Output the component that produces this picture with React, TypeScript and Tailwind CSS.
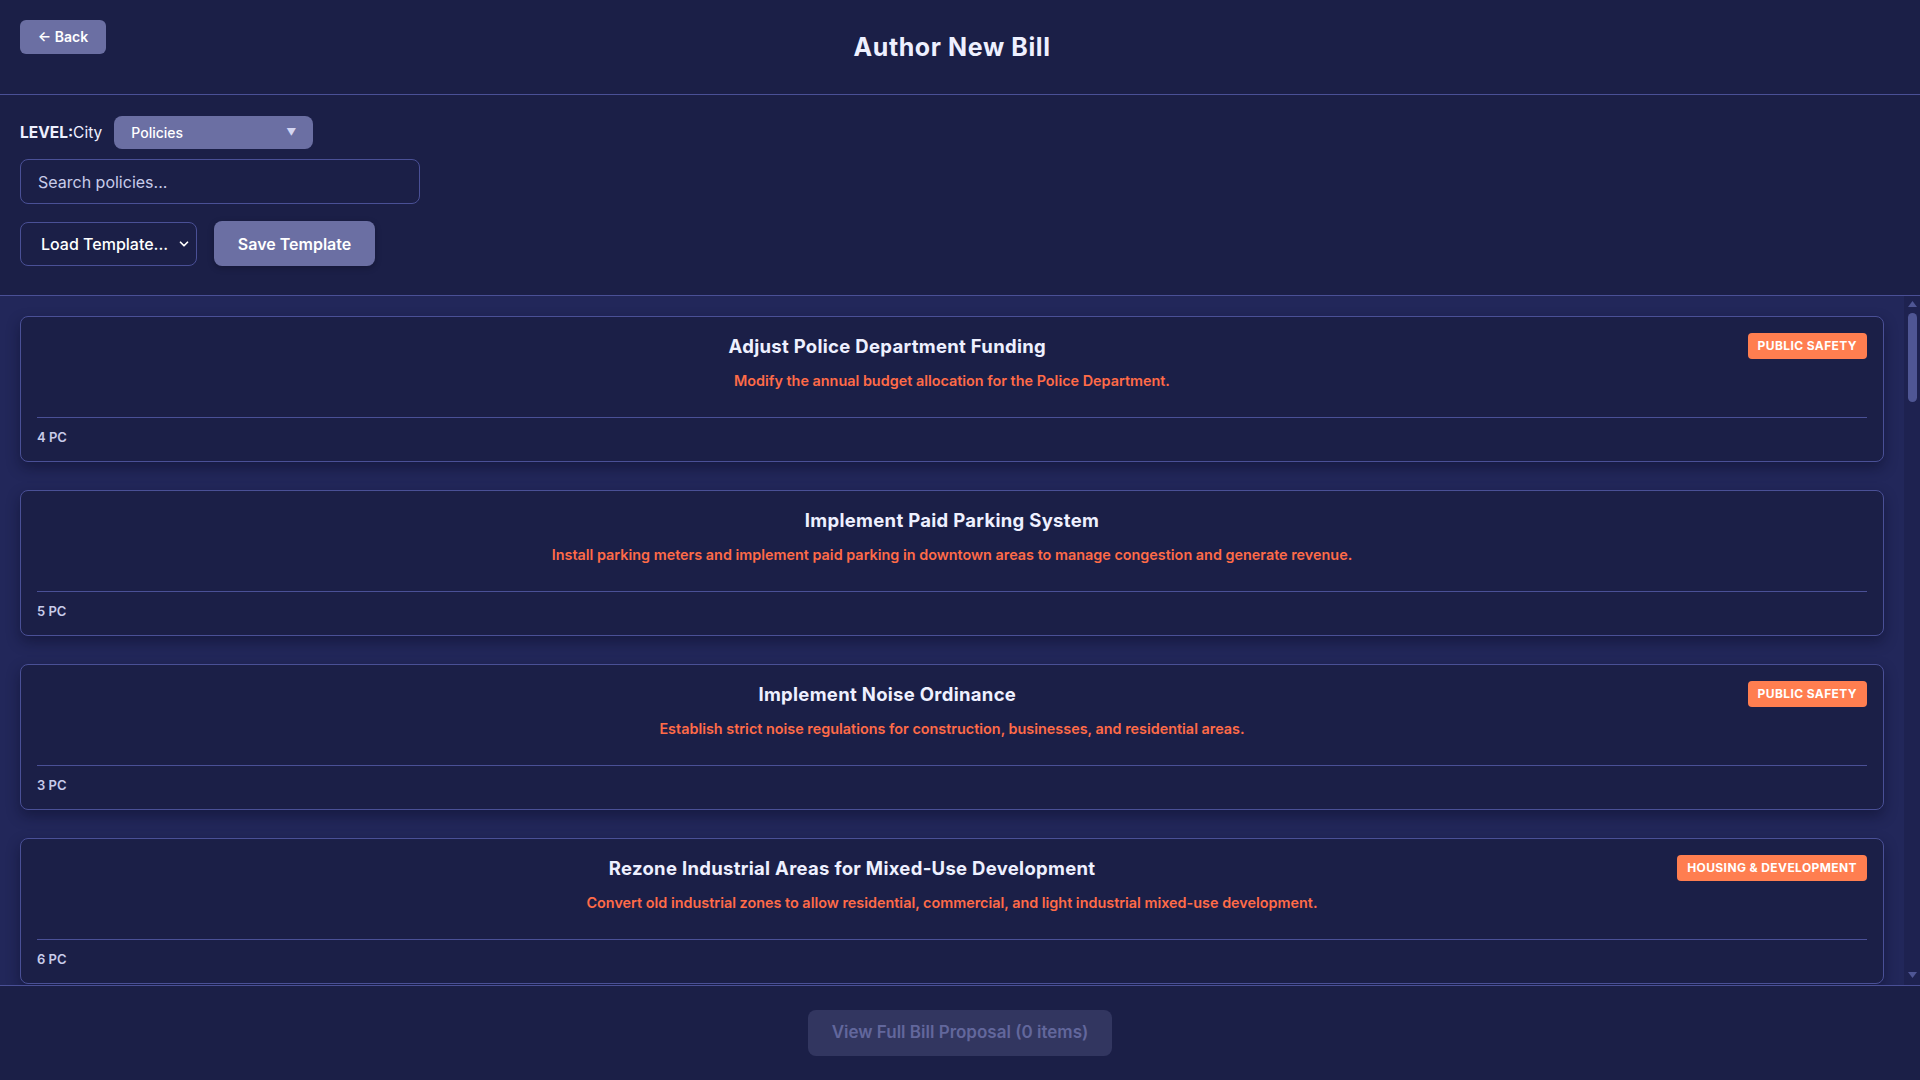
import { useState } from 'react'
import { ChevronDown } from 'lucide-react'

type Policy = {
  id: number
  title: string
  description: string
  cost: number
  category?: string
}

const policies: Policy[] = [
  { id: 1, title: 'Adjust Police Department Funding', description: 'Modify the annual budget allocation for the Police Department.', cost: 4, category: 'Public Safety' },
  { id: 2, title: 'Implement Paid Parking System', description: 'Install parking meters and implement paid parking in downtown areas to manage congestion and generate revenue.', cost: 5 },
  { id: 3, title: 'Implement Noise Ordinance', description: 'Establish strict noise regulations for construction, businesses, and residential areas.', cost: 3, category: 'Public Safety' },
  { id: 4, title: 'Rezone Industrial Areas for Mixed-Use Development', description: 'Convert old industrial zones to allow residential, commercial, and light industrial mixed-use development.', cost: 6, category: 'Housing & Development' },
  { id: 5, title: 'Expand Public Bus Routes', description: 'Add new bus lines connecting outer neighborhoods to the city center.', cost: 5, category: 'Transportation' },
  { id: 6, title: 'Create Community Garden Program', description: 'Convert vacant lots into community gardens managed by local residents.', cost: 2, category: 'Environment' },
  { id: 7, title: 'Adjust Property Tax Rate', description: 'Raise or lower the municipal property tax rate for the next fiscal year.', cost: 6 },
  { id: 8, title: 'Install Protected Bike Lanes', description: 'Build physically separated bike lanes along major city corridors.', cost: 4, category: 'Transportation' },
  { id: 9, title: 'Fund Affordable Housing Trust', description: 'Establish a dedicated fund to finance the construction of affordable housing units.', cost: 7, category: 'Housing & Development' },
  { id: 10, title: 'Expand Fire Department Staffing', description: 'Hire additional firefighters and paramedics to reduce emergency response times.', cost: 5, category: 'Public Safety' },
  { id: 11, title: 'Ban Single-Use Plastic Bags', description: 'Prohibit retailers from distributing single-use plastic bags at checkout.', cost: 2, category: 'Environment' },
  { id: 12, title: 'Extend Public Library Hours', description: 'Keep city libraries open later on weekdays and add Sunday hours.', cost: 3 },
  { id: 13, title: 'Launch Small Business Grant Program', description: 'Provide grants to help local small businesses open and expand within city limits.', cost: 4 },
  { id: 14, title: 'Upgrade Street Lighting to LED', description: 'Replace existing street lights with energy-efficient LED fixtures.', cost: 3, category: 'Environment' },
  { id: 15, title: 'Create Youth Summer Jobs Program', description: 'Fund paid summer employment opportunities for city residents aged 14 to 21.', cost: 4 },
  { id: 16, title: 'Establish Rent Stabilization', description: 'Limit annual rent increases for existing tenants in older apartment buildings.', cost: 6, category: 'Housing & Development' },
  { id: 17, title: 'Expand Curbside Recycling', description: 'Add weekly curbside pickup for recycling and compost to all households.', cost: 3, category: 'Environment' },
  { id: 18, title: 'Install Traffic Calming Measures', description: 'Add speed bumps, raised crosswalks, and roundabouts in residential neighborhoods.', cost: 3, category: 'Transportation' },
  { id: 19, title: 'Fund Mental Health Crisis Teams', description: 'Deploy trained mental health responders to non-violent emergency calls.', cost: 5, category: 'Public Safety' },
  { id: 20, title: 'Renovate City Parks', description: 'Repair playgrounds, trails, and facilities across the municipal park system.', cost: 4 },
  { id: 21, title: 'Reduce Minimum Parking Requirements', description: 'Lower the number of parking spaces required for new residential and commercial buildings.', cost: 2, category: 'Housing & Development' },
  { id: 22, title: 'Offer Free Public Wi-Fi', description: 'Provide free wireless internet access in public spaces and city buildings.', cost: 4 },
  { id: 23, title: 'Plant Urban Tree Canopy', description: 'Plant thousands of new street trees to reduce heat and improve air quality.', cost: 3, category: 'Environment' },
  { id: 24, title: 'Expand Neighborhood Watch Program', description: 'Support resident-led safety groups with training and communication tools.', cost: 2, category: 'Public Safety' },
  { id: 25, title: 'Build Homeless Shelter Facility', description: 'Construct a new shelter offering beds, meals, and support services.', cost: 6, category: 'Housing & Development' },
  { id: 26, title: 'Introduce Congestion Pricing', description: 'Charge a daily fee for vehicles entering the downtown core during peak hours.', cost: 5, category: 'Transportation' },
  { id: 27, title: 'Raise Municipal Minimum Wage', description: 'Set a citywide minimum wage above the state requirement.', cost: 6 },
  { id: 28, title: 'Fund After-School Programs', description: 'Provide free after-school activities and tutoring at community centers.', cost: 3 },
  { id: 29, title: 'Modernize Stormwater Drainage', description: 'Upgrade drainage infrastructure to prevent flooding during heavy storms.', cost: 5, category: 'Environment' },
  { id: 30, title: 'Create Pedestrian-Only Zones', description: 'Close selected downtown streets to car traffic on weekends.', cost: 3, category: 'Transportation' },
]

function PolicyCard({ policy }: { policy: Policy }) {
  return (
    <div className="rounded-lg border border-[#4a5096] bg-[#1b1f47] p-4 shadow-[0_6px_14px_rgba(8,10,35,0.45)]">
      <div className="flex h-[26px] items-center gap-2.5">
        <h3 className="flex-1 text-center text-[18.5px] font-bold leading-[26px] tracking-[0.3px] text-[#eef0ff]">{policy.title}</h3>
        {policy.category && (
          <span className="rounded bg-[#ff7e50] px-2.5 py-[5px] text-[12px] font-bold uppercase leading-4 tracking-[0.4px] text-white">
            {policy.category}
          </span>
        )}
      </div>
      <p className="mt-3 text-center text-[14.4px] font-semibold leading-5 text-[#ff6b48]">{policy.description}</p>
      <div className="mt-[26px] border-t border-[#4a5096] pt-[11px] text-[13px] font-semibold leading-4 text-[#c8cbea]">
        {policy.cost} PC
      </div>
    </div>
  )
}

// static scrollbar look; the real one is hidden
function ScrollTrack() {
  return (
    <div className="flex w-4 shrink-0 flex-col items-center bg-[#1e2250] pt-[5px] pb-[7px]">
      <svg width="9" height="6" viewBox="0 0 9 6" className="shrink-0">
        <path d="M4.5 0 L9 6 L0 6 Z" fill="#4f5694" />
      </svg>
      <div className="mt-[6px] h-[89px] w-[9px] shrink-0 rounded-full bg-[#4f5694]" />
      <div className="flex-1" />
      <svg width="9" height="6" viewBox="0 0 9 6" className="shrink-0">
        <path d="M0 0 L9 0 L4.5 6 Z" fill="#4f5694" />
      </svg>
    </div>
  )
}

export default function App() {
  const [search, setSearch] = useState('')
  const [type, setType] = useState('policies')
  const [template, setTemplate] = useState('')
  const [selected] = useState<number[]>([])

  const filtered = policies.filter(p => p.title.toLowerCase().includes(search.toLowerCase()))

  return (
    <div className="flex h-screen flex-col bg-[#1b1f47] font-['Inter','Noto_Sans',sans-serif] text-[#eef0ff]">
      {/* Header */}
      <div className="flex h-[95px] shrink-0 items-start border-b border-[#4a5096] px-5 pt-5">
        <button className="h-[34px] w-[86px] rounded-md bg-[#6b6fa3] text-sm font-semibold text-white">
          ← Back
        </button>
        <h1 className="mt-[11px] flex-1 text-center text-[25px] font-bold leading-8 tracking-[0.6px] text-[#eef0ff]">Author New Bill</h1>
        <div className="w-[102px]" />
      </div>

      {/* Controls */}
      <div className="shrink-0 border-b border-[#4a5096] px-5 pt-[21px] pb-[29px]">
        <div className="flex items-center gap-3">
          <span className="text-[15.5px]">
            <span className="font-bold">LEVEL:</span>City
          </span>
          <div className="relative">
            <select
              value={type}
              onChange={e => setType(e.target.value)}
              className="h-[33px] w-[199px] appearance-none rounded-lg bg-[#6b6fa3] pl-[17px] text-sm font-medium text-white outline-none"
            >
              <option value="policies">Policies</option>
              <option value="budget">Budget</option>
            </select>
            <span className="pointer-events-none absolute right-[17px] top-[9px] text-[10px] text-[#d4d6f2]">▼</span>
          </div>
        </div>
        <input
          value={search}
          onChange={e => setSearch(e.target.value)}
          placeholder="Search policies..."
          className="mt-[10px] block h-[45px] w-[400px] rounded-lg border border-[#4a5096] bg-transparent pl-[17px] text-base text-white outline-none placeholder:text-[#c8cbea]"
        />
        <div className="mt-[17px] flex items-center gap-[17px]">
          <div className="relative">
            <select
              value={template}
              onChange={e => setTemplate(e.target.value)}
              className="h-[44px] w-[177px] appearance-none rounded-lg border border-[#4a5096] bg-[#1b1f47] pl-5 text-base font-medium text-white outline-none"
            >
              <option value="">Load Template...</option>
            </select>
            <ChevronDown size={14} strokeWidth={3} className="pointer-events-none absolute right-[6px] top-[15px] text-white" />
          </div>
          <button className="h-[45px] w-[161px] rounded-lg bg-[#6b6fa3] text-base font-semibold text-white shadow-[0_2px_6px_rgba(0,0,0,0.25)]">
            Save Template
          </button>
        </div>
      </div>

      {/* Policy list */}
      <div className="flex min-h-0 flex-1 bg-[#22275a]">
        <div className="min-h-0 flex-1 overflow-y-auto p-5 [scrollbar-width:none]">
          <div className="flex flex-col gap-7">
            {filtered.map(p => (
              <PolicyCard key={p.id} policy={p} />
            ))}
          </div>
        </div>
        <ScrollTrack />
      </div>

      {/* Footer */}
      <div className="flex h-[95px] shrink-0 items-center justify-center border-t border-[#4a5096]">
        <button
          disabled={selected.length === 0}
          className="h-[46px] w-[304px] rounded-lg bg-[#323660] text-[17px] font-semibold text-[#62679c]"
        >
          View Full Bill Proposal ({selected.length} items)
        </button>
      </div>
    </div>
  )
}
